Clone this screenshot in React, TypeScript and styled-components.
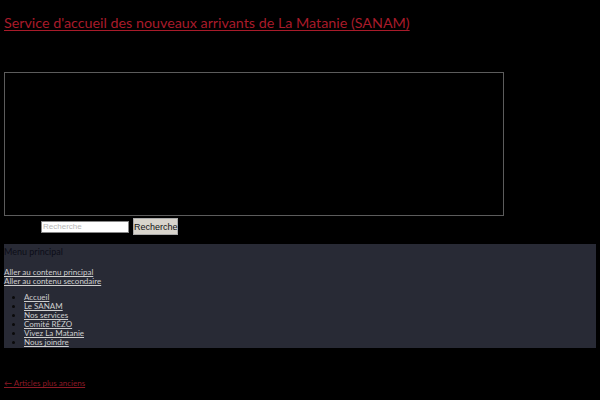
import React from 'react';
import styled, { createGlobalStyle } from 'styled-components';

const GlobalStyle = createGlobalStyle`
  html, body {
    margin: 0;
    padding: 0;
    background: #000;
  }
  body {
    padding: 0 4px;
    font-family: Lato, 'Open Sans', sans-serif;
  }
`;

const Page = styled.div`
  display: flex;
  flex-direction: column;
`;

const SiteTitle = styled.a`
  display: block;
  margin-top: 13px;
  font-size: 14.3px;
  line-height: 20px;
  color: #a81b2a;
  text-decoration: underline;
  text-underline-offset: 2px;
  width: fit-content;
`;

const HeaderBox = styled.div`
  margin-top: 39px;
  width: 498px;
  height: 142px;
  border: 1px solid #5c5c5c;
  background: #000;
`;

const SearchForm = styled.form`
  display: flex;
  align-items: center;
  gap: 4px;
  margin-top: 2px;
  padding-left: 37px;
  height: 17px;
`;

const SearchInput = styled.input`
  box-sizing: border-box;
  width: 88px;
  height: 12px;
  margin: 0;
  padding: 0 1px;
  border: 1px solid #888;
  background: #fff;
  font-family: 'Liberation Sans', Arial, sans-serif;
  font-size: 8px;
  &::placeholder {
    color: #b8b8b8;
  }
`;

const SearchButton = styled.button`
  box-sizing: border-box;
  width: 45px;
  height: 17px;
  margin: 0;
  padding: 0;
  border: 1px solid #aaa;
  background: #d8d4cc;
  color: #111;
  font-family: 'Liberation Sans', Arial, sans-serif;
  font-size: 9px;
`;

const Nav = styled.nav`
  margin-top: 9px;
  background: #282a35;
  padding: 2px 0 1px;
  font-size: 8px;
  line-height: 9px;
`;

const NavHeading = styled.div`
  color: #0c0d18;
  font-size: 9px;
  line-height: 12px;
  margin-bottom: 10px;
`;

const SkipLink = styled.a`
  display: block;
  width: fit-content;
  color: #cfcfcf;
  text-decoration: underline;
`;

const MenuList = styled.ul`
  margin: 7px 0 0;
  padding-left: 20px;
  list-style: disc;
  color: #111;
`;

const MenuItem = styled.li`
  line-height: 9px;
  &::marker {
    color: #0a0a0a;
  }
`;

const MenuLink = styled.a`
  color: #cfcfcf;
  text-decoration: underline;
`;

const OlderPosts = styled.a`
  margin-top: 30px;
  width: fit-content;
  font-size: 8px;
  color: #8d1a26;
  text-decoration: underline;
`;

const menu = ['Accueil', 'Le SANAM', 'Nos services', 'Comité RÉZO', 'Vivez La Matanie', 'Nous joindre'];

export default function App() {
  return (
    <Page>
      <GlobalStyle />
      <SiteTitle href="#">Service d'accueil des nouveaux arrivants de La Matanie (SANAM)</SiteTitle>
      <HeaderBox />
      <SearchForm onSubmit={(e) => e.preventDefault()}>
        <SearchInput placeholder="Recherche" />
        <SearchButton type="submit">Recherche</SearchButton>
      </SearchForm>
      <Nav>
        <NavHeading>Menu principal</NavHeading>
        <SkipLink href="#">Aller au contenu principal</SkipLink>
        <SkipLink href="#">Aller au contenu secondaire</SkipLink>
        <MenuList>
          {menu.map((item) => (
            <MenuItem key={item}>
              <MenuLink href="#">{item}</MenuLink>
            </MenuItem>
          ))}
        </MenuList>
      </Nav>
      <OlderPosts href="#">← Articles plus anciens</OlderPosts>
    </Page>
  );
}
